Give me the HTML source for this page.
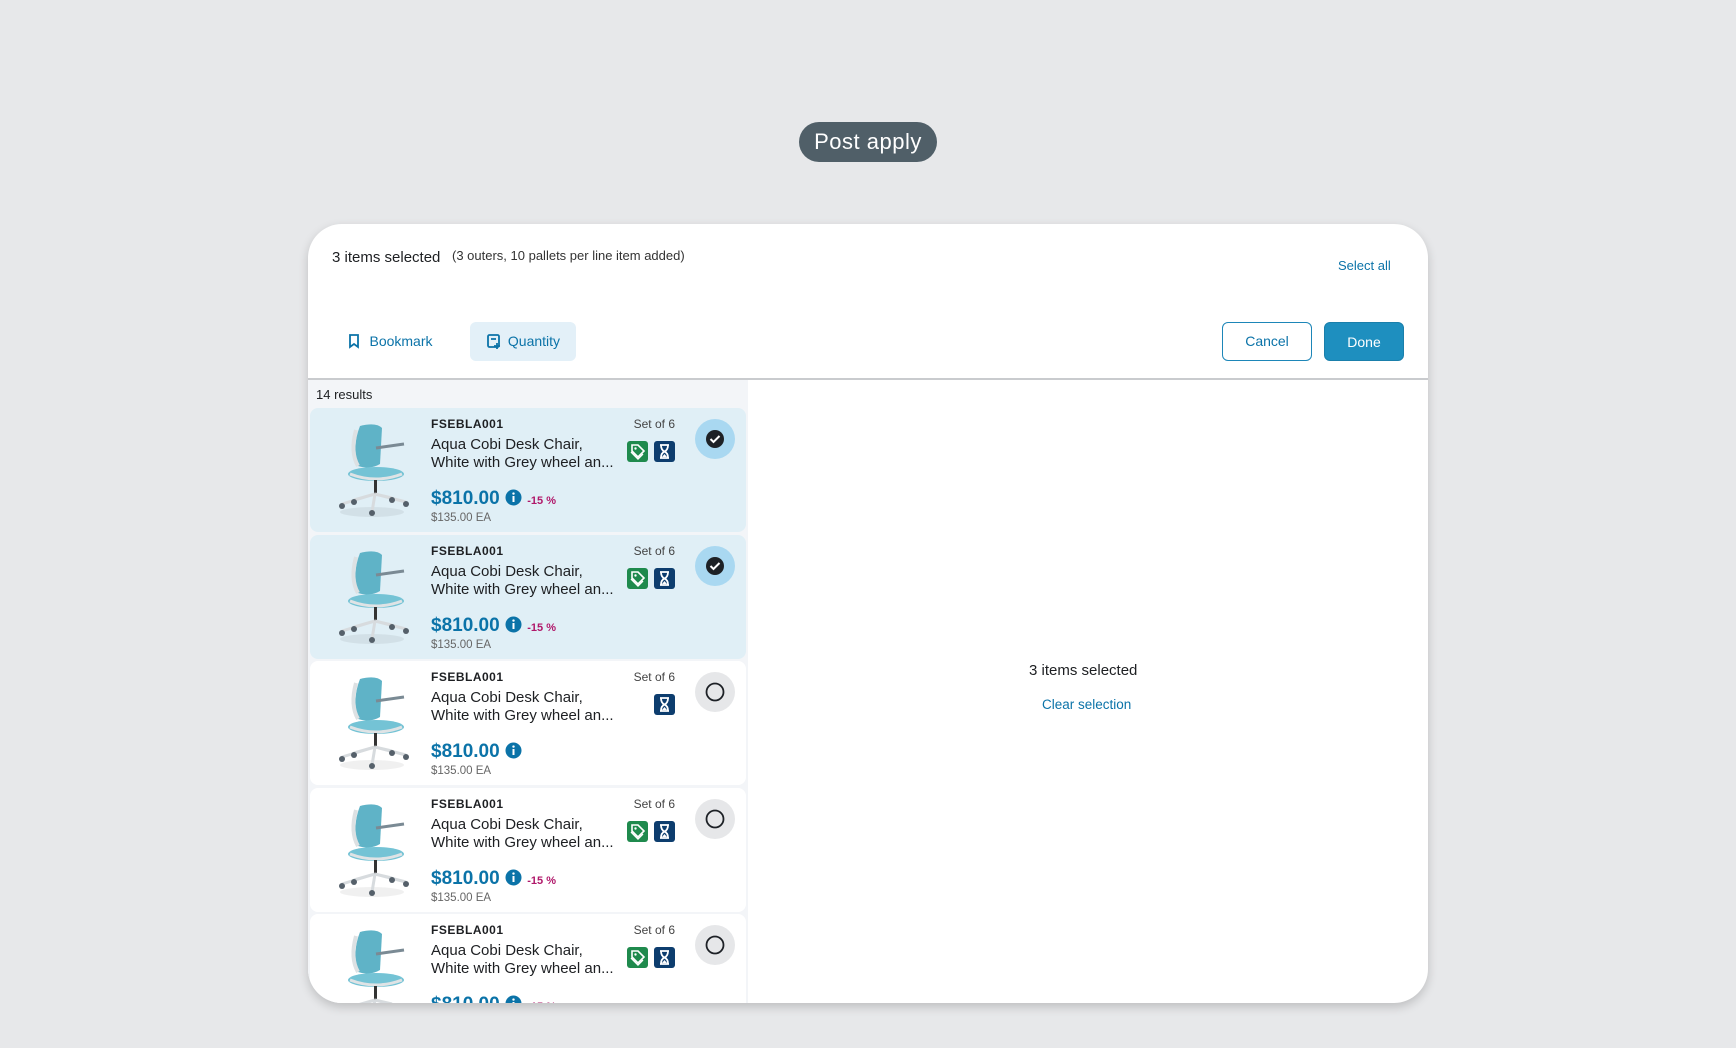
<!DOCTYPE html>
<html><head><meta charset="utf-8"><style>
*{box-sizing:border-box;margin:0;padding:0}
body{width:1736px;height:1048px;background:#e7e8ea;font-family:"Liberation Sans",sans-serif;position:relative;overflow:hidden;color:#1d1f22}
.pill{position:absolute;left:799px;top:122px;width:138px;height:40px;border-radius:20px;background:#505f68;color:#fff;font-size:22px;text-align:center;line-height:40px;letter-spacing:.5px}
.card{position:absolute;left:308px;top:224px;width:1120px;height:779px;background:#fff;border-radius:34px;overflow:hidden;box-shadow:0 4px 10px rgba(0,0,0,.18)}
.a{position:absolute;white-space:nowrap}
.blue{color:#0b73a8}
.btn{position:absolute;top:98px;height:39px;border-radius:6px;font-size:14px;line-height:39px;text-align:center}
.left{position:absolute;left:0;top:156px;width:440px;height:640px;background:#f3f5f8}
.item{position:absolute;left:2px;width:436px;height:124px;border-radius:8px;background:#fff}
.item.sel{background:#e0eff6}
.code{left:121px;top:9px;font-size:12px;font-weight:bold;letter-spacing:.5px}
.set{right:71px;top:9px;font-size:12px;color:#444}
.name{left:121px;top:28px;font-size:15px;line-height:18px}
.price{left:121px;top:80px;font-size:19px;font-weight:bold;color:#0b73a8}
.ea{left:121px;top:104px;font-size:11.5px;color:#666}
.ic{position:absolute;top:33px;width:21px;height:21px;border-radius:3px}
.radio{position:absolute;left:385px;top:11px;width:40px;height:40px;border-radius:50%;background:#e6e7e9}
.sel .radio{background:#a9d8f1}
</style></head><body>
<div class="pill">Post apply</div>
<div class="card">
 <div class="a" style="left:24px;top:25px;font-size:15px">3 items selected</div>
 <div class="a" style="left:144px;top:24px;font-size:13px;color:#333">(3 outers, 10 pallets per line item added)</div>
 <div class="a blue" style="left:1030px;top:34px;font-size:13px">Select all</div>
 <div class="btn blue" style="left:32px;width:100px">
  <svg width="14" height="16" viewBox="0 0 14 16" style="vertical-align:-3px;margin-right:8px"><path d="M3 2h8v12l-4-3-4 3z" fill="none" stroke="#0b73a8" stroke-width="1.8"/></svg>Bookmark</div>
 <div class="btn blue" style="left:162px;width:106px;background:#e3f0f8">
  <svg width="16" height="16" viewBox="0 0 16 16" style="vertical-align:-3px;margin-right:6px"><rect x="2" y="2" width="11" height="12" rx="1.5" fill="none" stroke="#0b73a8" stroke-width="1.8"/><path d="M5 6h5M11 10v6M8 13h6" stroke="#0b73a8" stroke-width="1.8"/></svg>Quantity</div>
 <div class="btn blue" style="left:914px;width:90px;border:1.5px solid #1d86b8;line-height:36px">Cancel</div>
 <div class="btn" style="left:1016px;width:80px;background:#1e8fbf;color:#fff;border:1px solid #1a7fab">Done</div>
 <div style="position:absolute;left:0;top:154px;width:1120px;height:2px;background:#c9cbce"></div>
 <div class="left">
  <div class="a" style="left:8px;top:7px;font-size:13px">14 results</div>
  ITEMS
 </div>
 <div class="a" style="left:721px;top:438px;font-size:15px">3 items selected</div>
 <div class="a blue" style="left:734px;top:473px;font-size:13.5px">Clear selection</div>
</div>
<script>
var chair='<svg class="a" style="left:26px;top:14px" width="74" height="96" viewBox="0 0 74 96"><ellipse cx="36" cy="90" rx="32" ry="5" fill="#000" opacity=".06"/><path d="M24 4 Q40 0 46 6 L44 42 Q34 48 22 44 Q16 24 24 4z" fill="#5fb3c7"/><path d="M22 44 Q14 30 20 8" stroke="#dde1e3" stroke-width="4" fill="none"/><path d="M40 26 L68 22" stroke="#7a8a94" stroke-width="3"/><ellipse cx="40" cy="52" rx="28" ry="7" fill="#74c3d5"/><path d="M14 52 Q40 62 66 52" stroke="#dfe3e5" stroke-width="3" fill="none"/><rect x="38" y="58" width="3" height="14" fill="#333"/><path d="M39 72 L6 82 M39 72 L70 80 M39 72 L36 90 M39 72 L18 78 M39 72 L56 76" stroke="#d7dbde" stroke-width="3"/><g fill="#55606a"><circle cx="6" cy="84" r="3"/><circle cx="70" cy="82" r="3"/><circle cx="36" cy="91" r="3"/><circle cx="18" cy="80" r="3"/><circle cx="56" cy="78" r="3"/></g></svg>';
var green='<div class="ic" style="left:317px;background:#1f8a4d"><svg width="21" height="21" viewBox="0 0 21 21"><path d="M5 4h6l6 6-6 6-6-6z" fill="none" stroke="#fff" stroke-width="1.6"/><circle cx="8.5" cy="7.5" r="1.2" fill="#fff"/><path d="M4 11l7 7 5-5" fill="none" stroke="#fff" stroke-width="1.4"/></svg></div>';
var navy='<div class="ic" style="left:344px;background:#0d3d6e"><svg width="21" height="21" viewBox="0 0 21 21"><path d="M6 4h9M6 17h9M7 4q0 5 3.5 6.5Q7 12 7 17M14 4q0 5-3.5 6.5Q14 12 14 17" fill="none" stroke="#fff" stroke-width="1.8"/><path d="M8 16l2.5-3 2.5 3z" fill="#fff"/></svg></div>';
var check='<svg width="40" height="40"><circle cx="20" cy="20" r="9" fill="#1d2126"/><path d="M15.5 20l3 3 6-6" stroke="#fff" stroke-width="2" fill="none"/></svg>';
var empty='<svg width="40" height="40"><circle cx="20" cy="20" r="8.5" fill="none" stroke="#1d2126" stroke-width="1.8"/></svg>';
var cfg=[[1,1,1],[1,1,1],[0,0,0],[0,1,1],[0,1,1]];var h='';
cfg.forEach(function(c,i){h+='<div class="item'+(c[0]?' sel':'')+'" style="top:'+(28+i*126.5)+'px">'+chair+
'<div class="a code">FSEBLA001</div><div class="a set">Set of 6</div><div class="a name">Aqua Cobi Desk Chair,<br>White with Grey wheel an...</div>'+(c[1]?green:'')+navy+
'<div class="a price">$810.00 <svg width="17" height="17" style="vertical-align:-2px" viewBox="0 0 17 17"><circle cx="8.5" cy="8.5" r="8" fill="#0b73a8"/><rect x="7.5" y="7" width="2" height="6" fill="#fff"/><circle cx="8.5" cy="4.6" r="1.2" fill="#fff"/></svg>'+(c[2]?' <span style="font-size:11px;color:#b0186a">-15 %</span>':'')+'</div><div class="a ea">$135.00 EA</div><div class="radio">'+(c[0]?check:empty)+'</div></div>';});
document.querySelector('.left').innerHTML=document.querySelector('.left').innerHTML.replace('ITEMS',h);
</script>
</body></html>
